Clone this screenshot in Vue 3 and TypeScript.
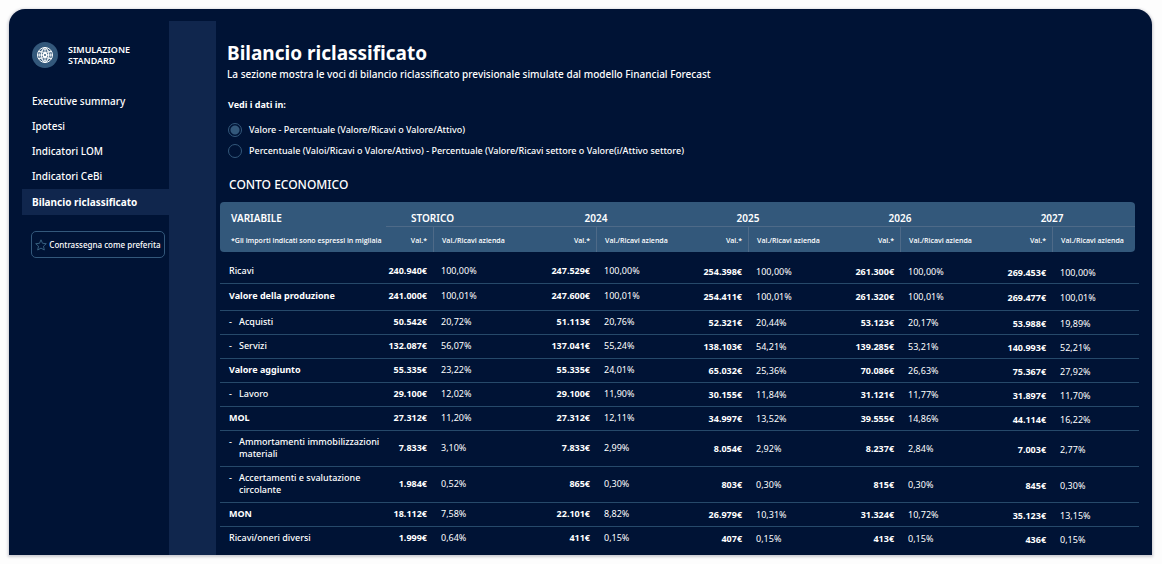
<script setup lang="ts">
import { ref } from 'vue'

interface Row {
  label: string
  kind?: 'total' | 'sub'
  size?: 'first' | 'second' | 'double' | 'last'
  values: [string, string][]
}

const links = ['Executive summary', 'Ipotesi', 'Indicatori LOM', 'Indicatori CeBi', 'Bilancio riclassificato']
const current = ref('Bilancio riclassificato')
const mode = ref('valore')
const years = ['STORICO', '2024', '2025', '2026', '2027']

const rows: Row[] = [
  { label: 'Ricavi', size: 'first', values: [['240.940€', '100,00%'], ['247.529€', '100,00%'], ['254.398€', '100,00%'], ['261.300€', '100,00%'], ['269.453€', '100,00%']] },
  { label: 'Valore della produzione', kind: 'total', size: 'second', values: [['241.000€', '100,01%'], ['247.600€', '100,01%'], ['254.411€', '100,01%'], ['261.320€', '100,01%'], ['269.477€', '100,01%']] },
  { label: 'Acquisti', kind: 'sub', values: [['50.542€', '20,72%'], ['51.113€', '20,76%'], ['52.321€', '20,44%'], ['53.123€', '20,17%'], ['53.988€', '19,89%']] },
  { label: 'Servizi', kind: 'sub', values: [['132.087€', '56,07%'], ['137.041€', '55,24%'], ['138.103€', '54,21%'], ['139.285€', '53,21%'], ['140.993€', '52,21%']] },
  { label: 'Valore aggiunto', kind: 'total', values: [['55.335€', '23,22%'], ['55.335€', '24,01%'], ['65.032€', '25,36%'], ['70.086€', '26,63%'], ['75.367€', '27,92%']] },
  { label: 'Lavoro', kind: 'sub', values: [['29.100€', '12,02%'], ['29.100€', '11,90%'], ['30.155€', '11,84%'], ['31.121€', '11,77%'], ['31.897€', '11,70%']] },
  { label: 'MOL', kind: 'total', values: [['27.312€', '11,20%'], ['27.312€', '12,11%'], ['34.997€', '13,52%'], ['39.555€', '14,86%'], ['44.114€', '16,22%']] },
  { label: 'Ammortamenti immobilizzazioni materiali', kind: 'sub', size: 'double', values: [['7.833€', '3,10%'], ['7.833€', '2,99%'], ['8.054€', '2,92%'], ['8.237€', '2,84%'], ['7.003€', '2,77%']] },
  { label: 'Accertamenti e svalutazione circolante', kind: 'sub', size: 'double', values: [['1.984€', '0,52%'], ['865€', '0,30%'], ['803€', '0,30%'], ['815€', '0,30%'], ['845€', '0,30%']] },
  { label: 'MON', kind: 'total', values: [['18.112€', '7,58%'], ['22.101€', '8,82%'], ['26.979€', '10,31%'], ['31.324€', '10,72%'], ['35.123€', '13,15%']] },
  { label: 'Ricavi/oneri diversi', size: 'last', values: [['1.999€', '0,64%'], ['411€', '0,15%'], ['407€', '0,15%'], ['413€', '0,15%'], ['436€', '0,15%']] },
]
</script>

<template>
  <div class="panel">
    <aside class="sidebar">
      <div class="brand">
        <svg class="logo" viewBox="0 0 26 26" aria-hidden="true">
          <circle cx="13" cy="13" r="13" fill="#33587b" />
          <g fill="none" stroke="#fff" stroke-width="1">
            <circle cx="13" cy="13" r="7.5" />
            <ellipse cx="13" cy="13" rx="3.5" ry="7.5" />
            <path d="M5.5 13h15M13 5.500v15M7 9.500q6 2 12 0M7 16.500q6-2 12 0" />
            <circle cx="13" cy="13" r="5.500" stroke-width=".7" />
          </g>
          <circle cx="13" cy="13" r="2.500" fill="#fff" />
          <circle cx="13" cy="13" r="1" fill="#33587b" />
        </svg>
        <span>SIMULAZIONE<br />STANDARD</span>
      </div>
      <nav class="nav">
        <a v-for="l in links" :key="l" href="#" :class="{ active: l === current }" @click.prevent="current = l">{{ l }}</a>
      </nav>
      <button type="button" class="favourite">
        <svg viewBox="0 0 12 12" aria-hidden="true">
          <path d="M6 .8l1.500 3.500 3.800.4-2.800 2.500.8 3.800L6 9.100l-3.300 1.900.8-3.800L.7 4.700l3.800-.4z" fill="none" stroke="#3c6687" stroke-width=".9" />
        </svg>
        Contrassegna come preferita
      </button>
    </aside>
    <div class="strip"></div>
    <main class="content">
      <h1>Bilancio riclassificato</h1>
      <p class="intro">La sezione mostra le voci di bilancio riclassificato previsionale simulate dal modello Financial Forecast</p>
      <fieldset>
        <legend>Vedi i dati in:</legend>
        <label><input v-model="mode" type="radio" name="mode" value="valore" />Valore - Percentuale (Valore/Ricavi o Valore/Attivo)</label>
        <label><input v-model="mode" type="radio" name="mode" value="percentuale" />Percentuale (Valoi/Ricavi o Valore/Attivo) - Percentuale (Valore/Ricavi settore o Valore(i/Attivo settore)</label>
      </fieldset>
      <h2>CONTO ECONOMICO</h2>
      <table>
        <colgroup>
          <col class="c-label" />
          <col class="c-first" />
          <col class="c-wide" />
          <col v-for="n in 7" :key="n" class="c-std" />
          <col class="c-wide" />
        </colgroup>
        <thead>
          <tr class="years">
            <th scope="col">VARIABILE</th>
            <th v-for="y in years" :key="y" colspan="2" scope="colgroup">{{ y }}</th>
          </tr>
          <tr class="units">
            <th>*Gli importi indicati sono espressi in migliaia</th>
            <template v-for="y in years" :key="y">
              <th class="val">Val.*</th>
              <th class="pct">Val./Ricavi azienda</th>
            </template>
          </tr>
        </thead>
        <tbody>
          <tr v-for="r in rows" :key="r.label" :class="[r.kind, r.size]">
            <th scope="row"><span>{{ r.label }}</span></th>
            <template v-for="(v, i) in r.values" :key="i">
              <td class="val" :class="'year-' + i"><span>{{ v[0] }}</span></td>
              <td class="pct" :class="'year-' + i"><span>{{ v[1] }}</span></td>
            </template>
          </tr>
        </tbody>
      </table>
    </main>
  </div>
</template>

<style>
body {
  margin: 0;
  background: #fdfdfd;
}
</style>

<style scoped>
.panel {
  display: flex;
  margin: 9px 10px 9px 9px;
  border-radius: 16px 16px 0 0;
  background: #001335;
  box-shadow: 0 1px 3px 1px #c9c9d0;
  color: #fff;
  font-family: "Noto Sans", "Open Sans", sans-serif;
  font-size: 9px;
  line-height: 12px;
}
.sidebar {
  flex: none;
  width: 147px;
  padding: 33px 0 0 13px;
}
.brand {
  display: flex;
  align-items: center;
  gap: 10px;
  padding-left: 10px;
  font-weight: 600;
  line-height: 11px;
}
.logo {
  width: 26px;
  height: 26px;
}
.nav {
  display: flex;
  flex-direction: column;
  margin-top: 21px;
}
.nav a {
  padding-left: 10px;
  color: #fff;
  font-size: 10px;
  font-weight: 500;
  line-height: 25px;
  text-decoration: none;
  white-space: nowrap;
}
.nav a.active {
  background: #10264d;
  font-weight: 700;
  line-height: 26px;
}
.favourite {
  display: flex;
  align-items: center;
  justify-content: center;
  gap: 2px;
  width: 134px;
  height: 27px;
  margin: 16px 0 0 9px;
  padding: 0;
  border: 1px solid #33587b;
  border-radius: 5px;
  background: transparent;
  color: #fff;
  font-family: inherit;
  font-size: 8px;
  font-weight: 500;
  white-space: nowrap;
}
.favourite svg {
  width: 12px;
  height: 12px;
}
.strip {
  flex: none;
  width: 47px;
  margin-top: 12px;
  background: #10264d;
}
.content {
  flex: 1;
  min-width: 0;
  padding: 29px 13px 0 4px;
}
h1 {
  margin: 0 0 0 7px;
  font-size: 19px;
  font-weight: 700;
  line-height: 30px;
}
.intro {
  margin: 0 0 0 7px;
  font-size: 10px;
  font-weight: 500;
  line-height: 13px;
}
fieldset {
  margin: 17px 0 0 8px;
  padding: 0;
  border: 0;
}
legend {
  padding: 0;
  margin-bottom: 7px;
  font-weight: 700;
  line-height: 14px;
}
label {
  display: flex;
  align-items: center;
  gap: 7px;
  height: 21px;
  font-weight: 500;
}
input {
  appearance: none;
  flex: none;
  width: 14px;
  height: 14px;
  margin: 0;
  border: 1px solid #33587b;
  border-radius: 50%;
}
input:checked {
  background: radial-gradient(circle, #33587b 4px, transparent 5px);
}
h2 {
  margin: 14px 0 7px 9px;
  font-size: 12px;
  font-weight: 500;
  line-height: 20px;
}
table {
  width: 100%;
  border-spacing: 0;
  table-layout: fixed;
}
.c-label { width: 166px; }
.c-first { width: 47px; }
.c-wide { width: 87px; }
.c-std { width: 76px; }
th,
td {
  padding: 0;
  text-align: left;
}
thead th {
  background: #33587b;
  background-clip: padding-box;
}
.years th {
  height: 25px;
  padding-top: 6px;
  box-sizing: border-box;
  box-shadow: inset 0 -1px #4e6a88;
  font-size: 10px;
  font-weight: 600;
  text-align: center;
}
.years th:first-child {
  padding-left: 11px;
  border-radius: 4px 0 0 0;
  box-shadow: none;
  text-align: left;
}
.years th:nth-child(2) {
  padding-left: 25px;
  text-align: left;
}
.years th:last-child {
  padding-right: 7px;
  border-right: 4px solid transparent;
  border-radius: 0 8px 0 0 / 0 4px 0 0;
}
.units th {
  height: 25px;
  padding-top: 2px;
  box-sizing: border-box;
  font-family: "Open Sans", "Noto Sans", sans-serif;
  font-size: 7px;
  font-weight: 600;
  white-space: nowrap;
}
.units th:first-child {
  padding-left: 11px;
  border-radius: 0 0 0 4px;
}
.units th.pct {
  border-left: 1px solid #4e6a88;
}
.units th:last-child {
  border-right: 4px solid transparent;
  border-radius: 0 0 8px 0 / 0 0 4px 0;
}
th.val,
td.val {
  padding-right: 6px;
  text-align: right;
}
th.pct,
td.pct {
  padding-left: 8px;
}
tbody th,
tbody td {
  box-sizing: border-box;
  height: 24px;
  padding-bottom: 2px;
  border-bottom: 1px solid #26496a;
}
tbody th {
  padding-left: 9px;
  font-weight: 500;
}
tbody td.val {
  font-weight: 700;
}
td.year-2,
td.year-3 {
  padding-top: 2px;
}
td.year-4 {
  padding-top: 4px;
}
.total th {
  font-weight: 700;
}
.sub th span {
  display: flex;
}
.sub th span::before {
  content: "-";
  flex: none;
  width: 10px;
}
.first > * {
  height: 32px;
}
.first span {
  display: block;
  margin-top: 9px;
}
.second > * { height: 27px; }
.double > * { height: 36px; }
.last > * {
  height: 28px;
  padding-bottom: 6px;
  border-bottom: 0;
}
</style>
